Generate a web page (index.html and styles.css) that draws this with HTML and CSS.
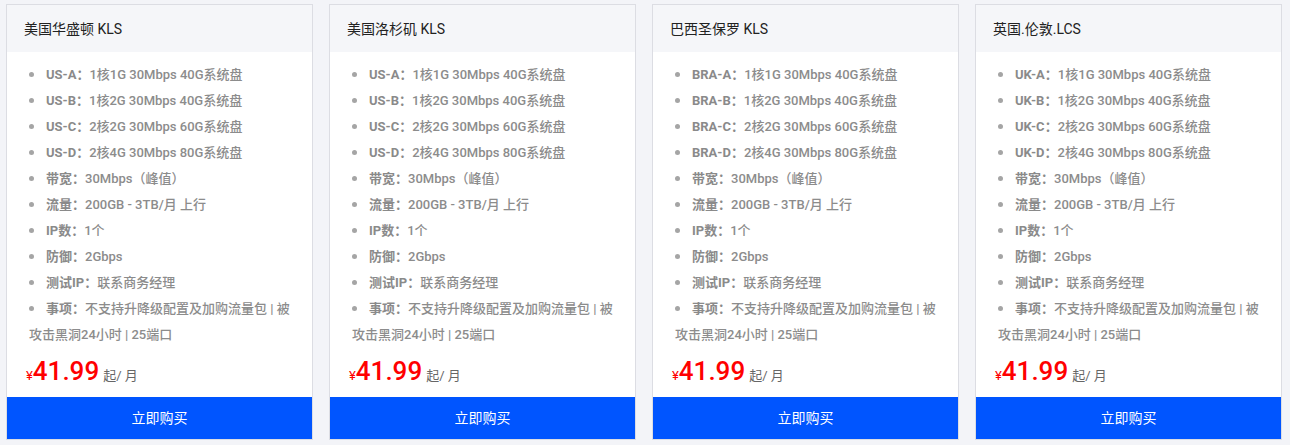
FILE: index.html
```html
<!DOCTYPE html>
<html lang="zh-CN">
<head>
    <meta charset="UTF-8">
    <meta name="viewport" content="width=device-width, initial-scale=1.0">
    <title>KLS 云服务器</title>
    <link rel="stylesheet" href="styles.css">
</head>
<body>

    <div class="plans">
        <!-- 美国华盛顿 -->
        <div class="plan">
            <div class="plan-head">美国华盛顿 KLS</div>
            <ul class="plan-list">
                <li><b>US-A：</b>1核1G 30Mbps 40G系统盘</li>
                <li><b>US-B：</b>1核2G 30Mbps 40G系统盘</li>
                <li><b>US-C：</b>2核2G 30Mbps 60G系统盘</li>
                <li><b>US-D：</b>2核4G 30Mbps 80G系统盘</li>
                <li><b>带宽：</b>30Mbps（峰值）</li>
                <li><b>流量：</b>200GB - 3TB/月 上行</li>
                <li><b>IP数：</b>1个</li>
                <li><b>防御：</b>2Gbps</li>
                <li><b>测试IP：</b>联系商务经理</li>
                <li><b>事项：</b>不支持升降级配置及加购流量包 | 被攻击黑洞24小时 | 25端口</li>
            </ul>
            <div class="plan-price"><span class="yen">¥</span><span class="num">41.99</span> <span class="unit">起/ 月</span></div>
            <a class="plan-btn" href="#">立即购买</a>
        </div>

        <!-- 美国洛杉矶 -->
        <div class="plan">
            <div class="plan-head">美国洛杉矶 KLS</div>
            <ul class="plan-list">
                <li><b>US-A：</b>1核1G 30Mbps 40G系统盘</li>
                <li><b>US-B：</b>1核2G 30Mbps 40G系统盘</li>
                <li><b>US-C：</b>2核2G 30Mbps 60G系统盘</li>
                <li><b>US-D：</b>2核4G 30Mbps 80G系统盘</li>
                <li><b>带宽：</b>30Mbps（峰值）</li>
                <li><b>流量：</b>200GB - 3TB/月 上行</li>
                <li><b>IP数：</b>1个</li>
                <li><b>防御：</b>2Gbps</li>
                <li><b>测试IP：</b>联系商务经理</li>
                <li><b>事项：</b>不支持升降级配置及加购流量包 | 被攻击黑洞24小时 | 25端口</li>
            </ul>
            <div class="plan-price"><span class="yen">¥</span><span class="num">41.99</span> <span class="unit">起/ 月</span></div>
            <a class="plan-btn" href="#">立即购买</a>
        </div>

        <!-- 巴西圣保罗 -->
        <div class="plan">
            <div class="plan-head">巴西圣保罗 KLS</div>
            <ul class="plan-list">
                <li><b>BRA-A：</b>1核1G 30Mbps 40G系统盘</li>
                <li><b>BRA-B：</b>1核2G 30Mbps 40G系统盘</li>
                <li><b>BRA-C：</b>2核2G 30Mbps 60G系统盘</li>
                <li><b>BRA-D：</b>2核4G 30Mbps 80G系统盘</li>
                <li><b>带宽：</b>30Mbps（峰值）</li>
                <li><b>流量：</b>200GB - 3TB/月 上行</li>
                <li><b>IP数：</b>1个</li>
                <li><b>防御：</b>2Gbps</li>
                <li><b>测试IP：</b>联系商务经理</li>
                <li><b>事项：</b>不支持升降级配置及加购流量包 | 被攻击黑洞24小时 | 25端口</li>
            </ul>
            <div class="plan-price"><span class="yen">¥</span><span class="num">41.99</span> <span class="unit">起/ 月</span></div>
            <a class="plan-btn" href="#">立即购买</a>
        </div>

        <!-- 英国伦敦 -->
        <div class="plan">
            <div class="plan-head">英国.伦敦.LCS</div>
            <ul class="plan-list">
                <li><b>UK-A：</b>1核1G 30Mbps 40G系统盘</li>
                <li><b>UK-B：</b>1核2G 30Mbps 40G系统盘</li>
                <li><b>UK-C：</b>2核2G 30Mbps 60G系统盘</li>
                <li><b>UK-D：</b>2核4G 30Mbps 80G系统盘</li>
                <li><b>带宽：</b>30Mbps（峰值）</li>
                <li><b>流量：</b>200GB - 3TB/月 上行</li>
                <li><b>IP数：</b>1个</li>
                <li><b>防御：</b>2Gbps</li>
                <li><b>测试IP：</b>联系商务经理</li>
                <li><b>事项：</b>不支持升降级配置及加购流量包 | 被攻击黑洞24小时 | 25端口</li>
            </ul>
            <div class="plan-price"><span class="yen">¥</span><span class="num">41.99</span> <span class="unit">起/ 月</span></div>
            <a class="plan-btn" href="#">立即购买</a>
        </div>
    </div>

</body>
</html>
```

FILE: styles.css
```css
body {
    font-family: Roboto, "Noto Sans CJK SC", sans-serif;
    background-color: #f3f4f8;
    margin: 0;
    padding: 0;
}

.plans {
    display: grid;
    grid-template-columns: repeat(4, 1fr);
    gap: 16px;
    padding: 4px 8px 0 6px;
}

.plan {
    background-color: white;
    border: 1px solid #dcdde3;
    display: flex;
    flex-direction: column;
}

.plan-head {
    height: 47px;
    line-height: 49px;
    padding: 0 17px;
    background-color: #f5f6f9;
    font-size: 14px;
    font-weight: normal;
    color: #222;
}

.plan-list {
    list-style: none;
    margin: 0;
    padding: 10px 18px 0 22px;
    font-size: 13px;
    font-weight: 500;
    line-height: 26px;
    color: #8c8c8c;
}

.plan-list li::before {
    content: "";
    display: inline-block;
    width: 5px;
    height: 5px;
    border-radius: 50%;
    background-color: #a5a5a5;
    margin: 0 12px 2px 0;
    vertical-align: middle;
}

.plan-list b {
    font-weight: bold;
    color: #8a8a8a;
}

.plan-price {
    padding: 6px 20px 0 19px;
    height: 43px;
    line-height: 34px;
    color: #666;
}

.plan-price .yen {
    color: #ff0000;
    font-size: 13px;
}

.plan-price .num {
    color: #ff0000;
    font-family: "Liberation Sans Narrow", Roboto, sans-serif;
    font-size: 26px;
    font-weight: 500;
}

.plan-price .unit {
    font-size: 13px;
}

.plan-btn {
    display: block;
    height: 42px;
    line-height: 42px;
    text-align: center;
    background-color: #0055ff;
    color: white;
    font-size: 14px;
    text-decoration: none;
}
```
